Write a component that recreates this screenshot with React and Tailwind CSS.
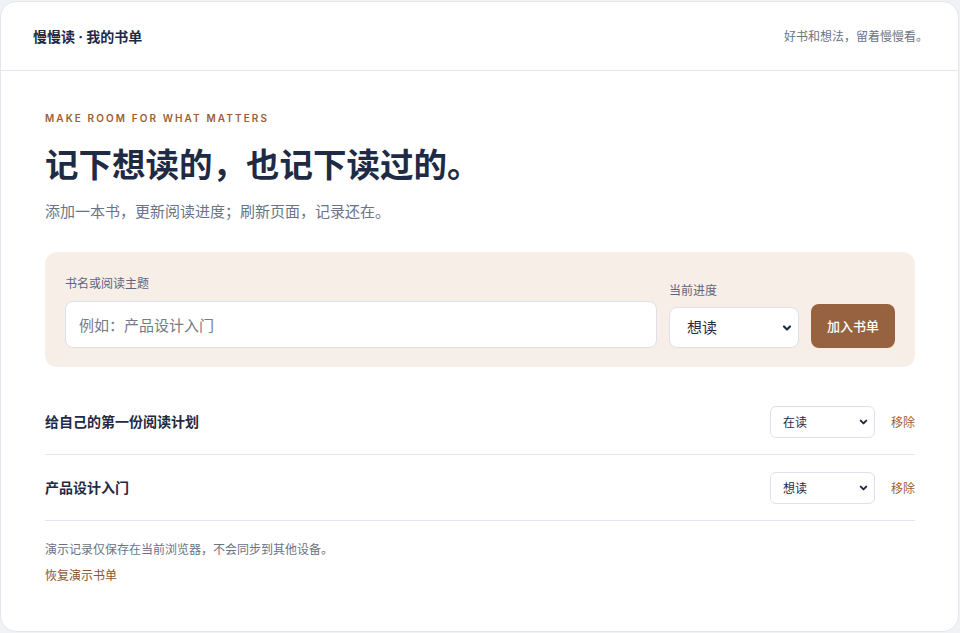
import React, { useState } from 'react';

const FONT = { fontFamily: '"Noto Sans CJK SC", Inter, "Noto Sans", sans-serif' };

const OPTIONS = ['想读', '在读', '读完'];

function Chevron({ className }) {
  return (
    <svg viewBox="0 0 12 12" className={className} fill="none" stroke="currentColor" strokeWidth="2.2" strokeLinecap="round" strokeLinejoin="round">
      <path d="M3 4.5 6 7.5 9 4.5" />
    </svg>
  );
}

function StatusSelect({ value, onChange, size = 'sm' }) {
  const big = size === 'lg';
  return (
    <div className={`relative ${big ? 'w-[130px] h-[41px]' : 'w-[105px] h-[32px]'}`}>
      <select
        value={value}
        onChange={(e) => onChange(e.target.value)}
        className={`h-full w-full appearance-none border border-[#dde1ee] bg-white text-[#1f2a44] outline-none ${big ? 'rounded-lg pl-[17px] text-[15px]' : 'rounded-md pl-[12px] text-[12px]'}`}
      >
        {OPTIONS.map((o) => <option key={o} value={o}>{o}</option>)}
      </select>
      <Chevron className={`pointer-events-none absolute top-1/2 -translate-y-1/2 text-[#1f2a44] ${big ? 'right-[6px] w-[12px] h-[12px]' : 'right-[6px] w-[11px] h-[11px]'}`} />
    </div>
  );
}

export default function App() {
  const [title, setTitle] = useState('');
  const [status, setStatus] = useState('想读');
  const [books, setBooks] = useState([
    { id: 1, name: '给自己的第一份阅读计划', status: '在读' },
    { id: 2, name: '产品设计入门', status: '想读' },
  ]);

  return (
    <div className="min-h-screen bg-[#f1f2f6]" style={FONT}>
      <div className="h-[1px]" />
      <div className="w-[959px] h-[631px] rounded-2xl border border-[#e3e5ed] bg-white overflow-hidden">
        <header className="flex h-[69px] items-center justify-between border-b border-[#e4e6ef] pl-8 pr-[30px]">
          <span className="font-['Inter','Noto_Sans_CJK_SC',sans-serif] text-[14px] font-bold text-[#1f2a44]">慢慢读 · 我的书单</span>
          <span className="text-[12px] text-[#6b7386]">好书和想法，留着慢慢看。</span>
        </header>

        <main className="pl-11 pr-[43px] pt-[40px]">
          <p className="font-['Inter'] text-[10px] leading-[15px] font-semibold tracking-[0.21em] text-[#9a5f36]">MAKE ROOM FOR WHAT MATTERS</p>
          <h1 className="mt-[15px] text-[33.5px] font-bold leading-[44px] text-[#1f2a44]">记下想读的，也记下读过的。</h1>
          <p className="mt-[15px] text-[15px] leading-[22px] text-[#6b7386]">添加一本书，更新阅读进度；刷新页面，记录还在。</p>

          <form
            className="mt-[30px] flex items-end gap-3 rounded-xl bg-[#f7eee8] px-5 pt-[22px] pb-[19px]"
            onSubmit={(e) => {
              e.preventDefault();
              if (!title.trim()) return;
              setBooks((prev) => [...prev, { id: Date.now(), name: title.trim(), status }]);
              setTitle('');
            }}
          >
            <label className="flex flex-1 flex-col gap-[9px]">
              <span className="text-[12px] leading-[18px] text-[#5f6679]">书名或阅读主题</span>
              <input
                value={title}
                onChange={(e) => setTitle(e.target.value)}
                placeholder="例如：产品设计入门"
                className="h-[47px] rounded-lg border border-[#dde1ee] bg-white px-[13px] text-[15px] text-[#1f2a44] outline-none placeholder:text-[#757b88]"
              />
            </label>
            <label className="flex flex-col gap-[8px]">
              <span className="text-[12px] leading-[18px] text-[#5f6679]">当前进度</span>
              <StatusSelect value={status} onChange={setStatus} size="lg" />
            </label>
            <button type="submit" className="h-[44px] w-[84px] rounded-lg bg-[#97623f] text-[13px] font-medium text-white">
              加入书单
            </button>
          </form>

          <ul className="mt-[22px]">
            {books.map((book) => (
              <li key={book.id} className="flex h-[66px] items-center justify-between border-b border-[#e4e6ef]">
                <span className="text-[14px] font-bold text-[#1f2a44]">{book.name}</span>
                <div className="flex items-center gap-4">
                  <StatusSelect
                    value={book.status}
                    onChange={(v) => setBooks((prev) => prev.map((b) => (b.id === book.id ? { ...b, status: v } : b)))}
                  />
                  <button
                    type="button"
                    className="text-[12px] text-[#9a5f36]"
                    onClick={() => setBooks((prev) => prev.filter((b) => b.id !== book.id))}
                  >
                    移除
                  </button>
                </div>
              </li>
            ))}
          </ul>

          <p className="mt-[19px] text-[12px] leading-[18px] text-[#6b7386]">演示记录仅保存在当前浏览器，不会同步到其他设备。</p>
          <button type="button" className="mt-[8px] text-[12px] leading-[18px] text-[#8a5530]">恢复演示书单</button>
        </main>
      </div>
    </div>
  );
}
